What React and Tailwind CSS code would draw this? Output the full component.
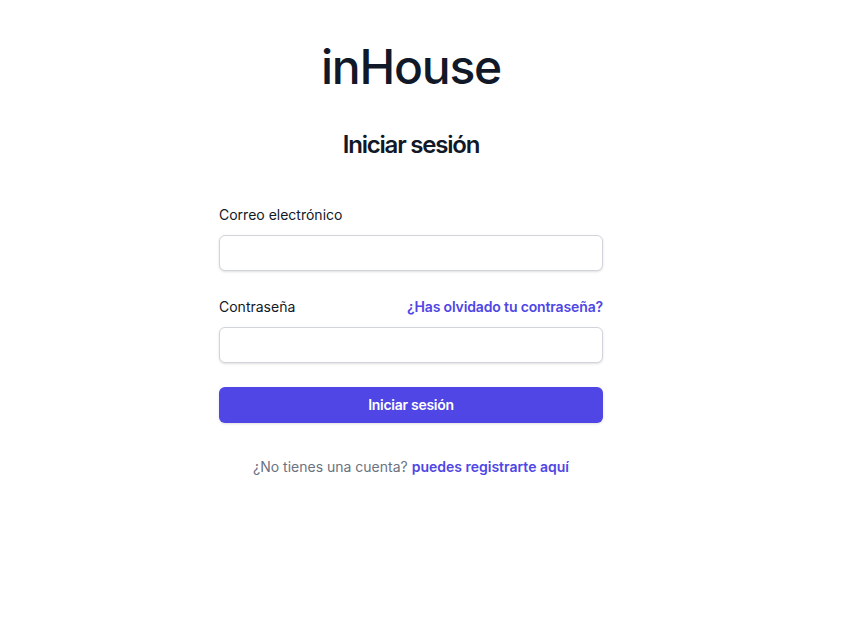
export default function App() {
  return (
    <div className="flex min-h-full flex-col justify-center pl-6 pr-[53px] pt-[43px] pb-12 bg-white" style={{ fontFamily: "Inter, 'Noto Sans', sans-serif" }}>
      <div className="mx-auto w-full max-w-sm">
        <h1 className="text-center text-5xl leading-none font-medium tracking-tight text-[#111827]">inHouse</h1>
        <h2 className="mt-9 text-center text-2xl/9 font-semibold tracking-tighter text-[#111827]">Iniciar sesión</h2>
      </div>
      <div className="mt-10 mx-auto w-full max-w-sm">
        <form className="space-y-6" onSubmit={(e) => e.preventDefault()}>
          <div>
            <label className="block text-sm/6 font-normal text-[#111827]">Correo electrónico</label>
            <div className="mt-2">
              <input type="email" className="block h-9 w-full rounded-md bg-white px-3 text-sm/6 text-[#111827] border border-[#d1d5db] shadow-sm outline-none" />
            </div>
          </div>
          <div>
            <div className="flex items-center justify-between">
              <label className="block text-sm/6 font-normal text-[#111827]">Contraseña</label>
              <div className="text-sm">
                <a href="#" className="font-semibold tracking-[-0.01em] text-[#4f46e5]">¿Has olvidado tu contraseña?</a>
              </div>
            </div>
            <div className="mt-2">
              <input type="password" className="block h-9 w-full rounded-md bg-white px-3 text-sm/6 text-[#111827] border border-[#d1d5db] shadow-sm outline-none" />
            </div>
          </div>
          <div>
            <button type="submit" className="flex h-9 w-full items-center justify-center rounded-md bg-[#4f46e5] px-3 text-sm/6 font-semibold tracking-[-0.02em] text-white shadow-sm">Iniciar sesión</button>
          </div>
        </form>
        <p className="mt-8 text-center text-sm/6 text-[#6b7280]">
          ¿No tienes una cuenta?{" "}
          <a href="#" className="font-semibold text-[#4f46e5]">puedes registrarte aquí</a>
        </p>
      </div>
    </div>
  );
}
